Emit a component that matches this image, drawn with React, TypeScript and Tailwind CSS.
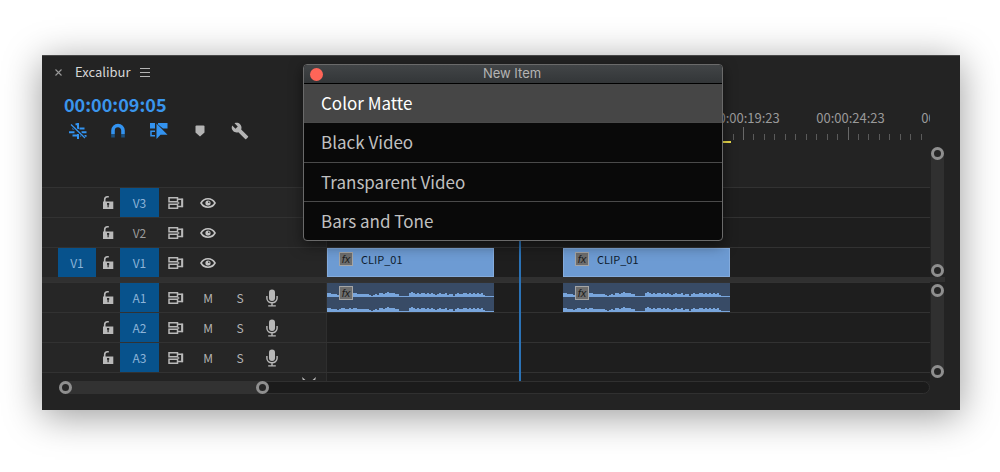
import type { ReactNode } from "react";
import { MdBuild } from "react-icons/md";

type TrackProps = {
  name: string;
  targeted?: boolean;
  source?: string;
  kind: "video" | "audio";
  children?: ReactNode;
};

const LEVELS = [
  4, 4, 3, 3, 3, 2, 3, 4, 4, 3, 3, 4, 3, 4, 4, 3, 3, 3, 3, 3, 3, 2, 1, 2, 3, 2, 4, 4, 3, 4, 5, 4, 4, 4, 3, 3, 1, 1,
  1, 1, 1, 4, 5, 4, 3, 4, 3, 4, 4, 3, 4, 3, 4, 3, 2, 3, 4, 3, 3, 4, 2, 3, 3, 1, 3, 4, 3, 3, 4, 4, 3, 4, 3, 4, 3, 4, 3,
  4, 2, 1, 1, 1, 1, 1,
];

function wave(base: number) {
  return (
    `M0 ${base}` +
    LEVELS.map((h, i) => `L${i * 2} ${base - h}H${i * 2 + 2}`).join("") +
    `V${base}Z`
  );
}

function LockIcon() {
  return (
    <svg viewBox="0 0 12 14" className="h-3.5 w-3" fill="none">
      <path d="M2.7 6V3.6C2.7 1.9 3.800.8 5.500.8h1.300" stroke="#b9b9b9" strokeWidth="1.6" />
      <path d="M1 5.500h10.300V13H1z" fill="#b9b9b9" />
      <path d="M5 7h2.200v1.800h-.5v2.400h-1.200V8.800H5z" fill="#262626" />
    </svg>
  );
}

function SyncIcon() {
  return (
    <svg viewBox="0 0 16 12" className="h-3 w-4" fill="none" stroke="#b9b9b9" strokeWidth="1.5">
      <path d="M1 .8h8.500v3.900H1zM1 7.300h8.500v3.900H1z" />
      <path d="M9.500 2.300h4.500v7.200H9.500M9.500 6h1.800" />
      <path d="M14.300 1.600v8.600" strokeWidth="1.8" />
    </svg>
  );
}

function EyeIcon() {
  return (
    <svg viewBox="0 0 16 12" className="h-3 w-4" fill="none">
      <path d="M1 6C4.200.4 11.800.4 15 6 11.800 11.600 4.200 11.600 1 6z" stroke="#c4c4c4" strokeWidth="1.6" />
      <circle cx="8" cy="6" r="2.600" fill="#c4c4c4" />
      <circle cx="8.800" cy="5.200" r=".8" fill="#262626" />
    </svg>
  );
}

function MicIcon() {
  return (
    <svg viewBox="0 0 12 18" className="h-[18px] w-3" fill="none" stroke="#b9b9b9" strokeWidth="1.4">
      <rect x="3" y=".5" width="6" height="11.500" rx="3" fill="#b9b9b9" stroke="none" />
      <path d="M.9 7v2.200c0 6 10.200 6 10.200 0V7M6 13.800v3M2.200 16.900h7.600" />
    </svg>
  );
}

function Track({ name, targeted, source, kind, children }: TrackProps) {
  return (
    <div className="flex h-[30px] border-t border-[#323232]">
      <div className="flex w-[285px] shrink-0 items-stretch border-r border-[#2e2e2e] bg-[#262626] pl-4 text-[12px] text-[#b4b4b4]">
        <div className="flex w-[38px] items-center">
          {source && (
            <button className="h-full w-[38px] bg-[#07528c] text-[#8db4d8]">{source}</button>
          )}
        </div>
        <button aria-label={`Lock ${name}`} className="flex w-6 items-center justify-center">
          <LockIcon />
        </button>
        <button className={targeted ? "w-[39px] bg-[#07528c] text-[#8db4d8]" : "w-[39px] text-[#9c9c9c]"}>
          {name}
        </button>
        <button aria-label={`Sync lock ${name}`} className="flex w-[33px] items-center justify-center">
          <SyncIcon />
        </button>
        {kind === "video" ? (
          <button aria-label={`Show ${name}`} className="flex w-8 items-center justify-center">
            <EyeIcon />
          </button>
        ) : (
          <>
            <button aria-label={`Mute ${name}`} className="w-8">M</button>
            <button aria-label={`Solo ${name}`} className="w-8">S</button>
            <button aria-label={`Record ${name}`} className="flex w-8 items-center justify-center">
              <MicIcon />
            </button>
          </>
        )}
      </div>
      <div className="flex min-w-0 flex-1 gap-[69px] overflow-hidden bg-[#1e1e1e]">{children}</div>
    </div>
  );
}

function FxBadge() {
  return (
    <span className="flex size-3.5 items-center justify-center border border-[#a5a5a5] bg-[#6d6d6d] font-['Liberation_Sans'] text-[11px] leading-none text-[#1c1c1c] italic">
      fx
    </span>
  );
}

function VideoClip() {
  return (
    <div className="flex w-[167px] shrink-0 items-start gap-2 border border-[#84abdc] bg-[#6d9bd3] pt-[3px] pl-[11px] text-[11px] leading-[14px] text-[#0d1c2e]">
      <FxBadge />
      CLIP_01
    </div>
  );
}

function AudioClip() {
  return (
    <div className="grid w-[167px] shrink-0 bg-[#384b66]">
      <svg viewBox="0 0 167 29" className="col-start-1 row-start-1 h-[29px] w-[167px]" fill="#78a5dc">
        <path d={wave(14)} />
        <path d={wave(29)} />
      </svg>
      <div className="col-start-1 row-start-1 pt-[3px] pl-3">
        <FxBadge />
      </div>
    </div>
  );
}

function Handle({ label }: { label: string }) {
  return (
    <button aria-label={label} className="size-[13px] shrink-0 rounded-full border-[3px] border-[#8f8f8f] bg-[#262626]" />
  );
}

function VerticalZoom({ label }: { label: string }) {
  return (
    <div className="flex w-[13px] flex-1 flex-col items-center justify-between rounded-full bg-[#303030]">
      <Handle label={`${label} top`} />
      <Handle label={`${label} bottom`} />
    </div>
  );
}

function Ruler() {
  return (
    <div className="flex min-w-0 flex-1 flex-col justify-end overflow-hidden">
      <div className="flex pl-[366px] text-[13px] leading-4 text-[#9a9a9a]">
        {["00:00:19:23", "00:00:24:23", "00:00:29:23"].map((t) => (
          <span key={t} className="w-[105px] shrink-0 text-center">{t}</span>
        ))}
      </div>
      <svg className="h-[15px] w-full">
        {Array.from({ length: 58 }, (_, i) => (
          <rect
            key={i}
            x={Math.round(i * 10.45 - 2)}
            y={i % 10 === 0 ? 1 : 8}
            width="1"
            height={i % 10 === 0 ? 13 : 6}
            fill={i % 10 === 0 ? "#686868" : "#5a5a5a"}
          />
        ))}
      </svg>
      <div className="h-0.5 w-[404px] bg-[#f0e04c]" />
    </div>
  );
}

function Toolbar() {
  return (
    <div className="flex items-center text-[#3393f0]">
      <button aria-label="Insert as nests" className="flex w-[41px] justify-start">
        <svg viewBox="0 0 18 16" className="h-4 w-[18px]" fill="none" stroke="currentColor" strokeWidth="2">
          <path d="M9 0v6M6.500 1.200h3M10.500 5.500h5M0 9.300h5.500M12.500 9.300h5M3.500 12.500h4.500M9 11v5M11 12.500h1.500M15 13h2.500M3.500 5.500h3" />
          <path d="M2.500 2l13 12.500" stroke="#232323" strokeWidth="3" />
          <path d="M2 1.500l14 13.500" strokeWidth="1.300" />
        </svg>
      </button>
      <button aria-label="Snap" className="flex w-10 justify-start">
        <svg viewBox="0 0 16 16" className="size-4" fill="none" stroke="currentColor" strokeWidth="3.600">
          <path d="M3 11V7.500a5 5 0 0 1 10 0V11" />
          <path d="M3 11v3.500M13 11v3.500" stroke="#1c5180" />
        </svg>
      </button>
      <button aria-label="Linked selection" className="flex w-[45px] justify-start">
        <svg viewBox="0 0 18 16" className="h-4 w-[18px]" fill="currentColor">
          <path d="M0 0h5v5.500H0zM8 0h9.500v5.500H13L8 1.500z" />
          <path d="M5 8.200H1v4.600h4" fill="none" stroke="currentColor" strokeWidth="1.500" />
          <path d="M6.500.500v15.500l4-4.300h7z" />
        </svg>
      </button>
      <button aria-label="Add marker" className="flex w-9 justify-start text-[#b4b4b4]">
        <svg viewBox="0 0 10 12" className="h-3 w-2.5" fill="currentColor">
          <path d="M.5 1.500Q.5.500 1.500.500h7q1 0 1 1V7.500L5 11.500.500 7.500z" />
        </svg>
      </button>
      <button aria-label="Timeline display settings" className="text-[#b4b4b4]">
        <MdBuild className="size-[18px]" />
      </button>
    </div>
  );
}

function NewItemDialog() {
  const items = ["Color Matte", "Black Video", "Transparent Video", "Bars and Tone"];
  return (
    <div
      role="dialog"
      aria-label="New Item"
      className="absolute top-2 left-[261px] w-[420px] overflow-hidden rounded-[4px] border border-[#6a6a6a] bg-[#090909] shadow-[0_4px_14px_rgba(0,0,0,0.5)]"
    >
      <div className="flex h-[18px] items-center bg-linear-to-b from-[#424547] to-[#333638] px-1.5 font-['Inter'] text-[13px] text-[#b4b4b4]">
        <button aria-label="Close" className="size-[13px] rounded-full bg-[#ff6558]" />
        <h2 className="flex-1 pr-[15px] text-center">New Item</h2>
      </div>
      <ul className="flex h-[157px] flex-col divide-y divide-[#4a4a4a] border-t border-black">
        {items.map((item, i) => (
          <li key={item} className="flex flex-1">
            <button
              className={
                i === 0
                  ? "w-full bg-[#464646] px-[17px] text-left text-[17px] leading-6 text-white"
                  : "w-full px-[17px] text-left text-[17px] leading-6 text-[#c0c0c0]"
              }
            >
              {item}
            </button>
          </li>
        ))}
      </ul>
    </div>
  );
}

export default function App() {
  return (
    <main className="bg-white pt-[55px] pr-10 pb-[62px] pl-[42px] font-['Noto_Sans_CJK_SC',sans-serif]">
      <section className="relative border-t border-[#484848] bg-[#232323] pb-4 shadow-[0_6px_36px_rgba(0,0,0,0.4)]">
        <div className="flex h-[87px]">
          <div className="w-[285px] shrink-0 pt-[7px]">
            <div className="flex items-center pl-[13px] text-[13px] leading-[18px] text-[#d6d6d6]">
              <button aria-label="Close panel" className="mr-[13px]">
                <svg viewBox="0 0 7 7" className="size-[7px]" stroke="#9a9a9a" strokeWidth="1.100">
                  <path d="M.5.5l6 6M6.500.5l-6 6" />
                </svg>
              </button>
              Excalibur
              <button aria-label="Panel menu" className="ml-2.5">
                <svg viewBox="0 0 10 9" className="h-[9px] w-2.5" fill="#b4b4b4">
                  <path d="M0 0h10v1H0zM0 4h10v1H0zM0 8h10v1H0z" />
                </svg>
              </button>
            </div>
            <div className="pt-[11px] pl-[22px] text-[18px] leading-6 font-bold text-[#3a95ec]">00:00:09:05</div>
            <div className="pt-1.5 pl-[27px]">
              <Toolbar />
            </div>
          </div>
          <Ruler />
          <div className="w-[30px]" />
        </div>

        <div className="relative">
          <div className="flex">
            <div className="min-w-0 flex-1 pt-11">
              <Track kind="video" name="V3" targeted />
              <Track kind="video" name="V2" />
              <Track kind="video" name="V1" targeted source="V1">
                <VideoClip />
                <VideoClip />
              </Track>
            </div>
            <div className="flex w-[30px] flex-col pt-1 pl-px">
              <VerticalZoom label="Video zoom" />
            </div>
          </div>
          <div className="mr-[15px] h-[5px] bg-[#303030]" />
          <div className="flex">
            <div className="min-w-0 flex-1">
              <Track kind="audio" name="A1" targeted>
                <AudioClip />
                <AudioClip />
              </Track>
              <Track kind="audio" name="A2" targeted />
              <Track kind="audio" name="A3" targeted />
              <div className="flex h-[9px] border-t border-[#323232]">
                <div className="flex w-[285px] items-end justify-end border-r border-[#2e2e2e] pr-2.5 pb-px">
                  <svg viewBox="0 0 14 3" className="h-[3px] w-3.5" fill="#b9b9b9">
                    <path d="M0 0l3.500 3H.800zM14 0l-3.500 3h2.700z" />
                  </svg>
                </div>
                <div className="flex-1 bg-[#1e1e1e]" />
              </div>
            </div>
            <div className="flex w-[30px] flex-col pt-0.5 pb-[3px] pl-px">
              <VerticalZoom label="Audio zoom" />
            </div>
          </div>
          <div className="absolute top-0 bottom-0 left-[477px] w-0.5 bg-[#2b72b5]" />
        </div>

        <div className="mr-[30px] ml-[17px] flex h-[13px] rounded-full border border-[#303030] bg-[#1b1b1b]">
          <div className="-my-px -ml-px flex w-[210px] items-center justify-between rounded-full bg-[#323232]">
            <Handle label="Zoom start" />
            <Handle label="Zoom end" />
          </div>
        </div>

        <NewItemDialog />
      </section>
    </main>
  );
}
